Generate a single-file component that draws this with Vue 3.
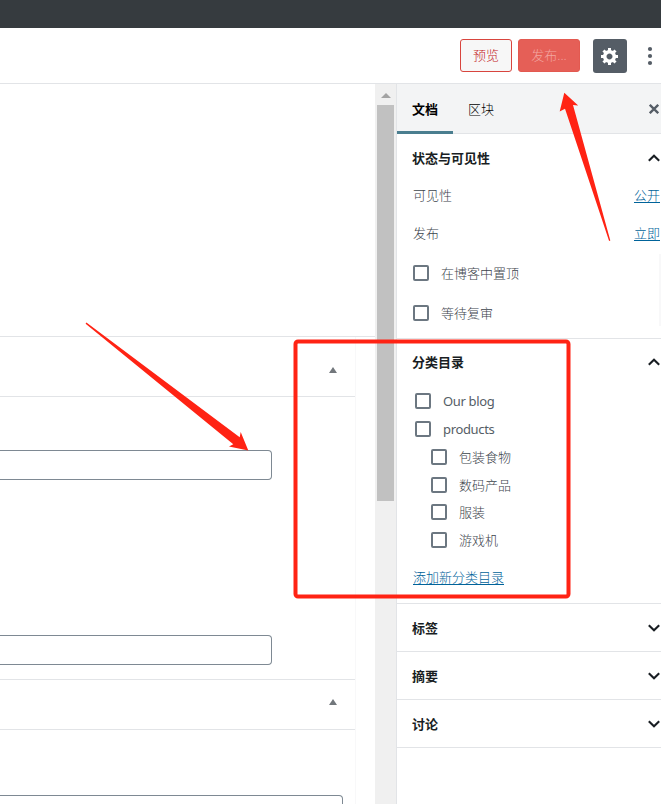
<script setup>
const categories = [
  { name: 'Our blog', latin: true },
  { name: 'products', latin: true },
  { name: '包装食物', child: true },
  { name: '数码产品', child: true },
  { name: '服装', child: true },
  { name: '游戏机', child: true },
]
const closedPanels = ['标签', '摘要', '讨论']
</script>

<template>
  <div class="editor">
    <div class="admin-bar"></div>
    <header class="toolbar">
      <button class="btn preview">预览</button>
      <button class="btn publish">发布...</button>
      <button class="gear" aria-label="设置">
        <svg width="20" height="20" viewBox="0 0 20 20"><path fill="#fff" fill-rule="evenodd" d="M18 12h-2.180c-.17.7-.44 1.350-.81 1.930l1.540 1.540-2.100 2.100-1.540-1.540c-.58.36-1.230.63-1.910.79V19H8v-2.180c-.68-.16-1.330-.43-1.910-.79l-1.540 1.540-2.120-2.120 1.540-1.540c-.36-.58-.63-1.230-.79-1.910H1V9.030h2.170c.16-.7.44-1.350.8-1.940L2.430 5.550l2.100-2.100 1.540 1.540c.58-.37 1.240-.64 1.930-.81V2h3v2.180c.68.16 1.330.43 1.910.79l1.540-1.540 2.120 2.120-1.540 1.540c.36.59.64 1.240.8 1.940H18V12zm-8.500 1.500c1.660 0 3-1.340 3-3s-1.340-3-3-3-3 1.340-3 3 1.340 3 3 3z"/></svg>
      </button>
      <svg class="more" width="6" height="20" viewBox="0 0 6 20"><g fill="#555d66"><circle cx="3" cy="3" r="2.1"/><circle cx="3" cy="10" r="2.1"/><circle cx="3" cy="17" r="2.1"/></g></svg>
    </header>

    <div class="body">
      <main class="content">
        <div class="canvas"></div>
        <div class="metaboxes">
          <div class="box-head first"><span class="up"></span></div>
          <div class="box-body">
            <div class="field"></div>
            <div class="field"></div>
          </div>
          <div class="box-head second"><span class="up"></span></div>
          <div class="box-body last"><div class="field wide"></div></div>
        </div>
      </main>

      <div class="scrollbar">
        <span class="scroll-up"></span>
        <div class="thumb"></div>
      </div>

      <aside class="sidebar">
        <nav class="tabs">
          <span class="tab active">文档</span>
          <span class="tab">区块</span>
          <svg class="close" width="10" height="10" viewBox="0 0 10 10"><path d="M.8.8l8.400 8.400M9.200.8L.8 9.200" stroke="#555d66" stroke-width="2.300"/></svg>
        </nav>

        <section class="panel status">
          <h2>状态与可见性
            <svg class="chevron" width="12" height="8" viewBox="0 0 12 8"><path d="M.8 6.700L6 1.800l5.200 4.900" fill="none" stroke="#191e23" stroke-width="2.100"/></svg>
          </h2>
          <div class="row"><span>可见性</span><a>公开</a></div>
          <div class="row"><span>发布</span><a>立即</a></div>
          <label class="check"><i></i>在博客中置顶</label>
          <label class="check"><i></i>等待复审</label>
          <div class="edge"></div>
        </section>

        <section class="panel cats">
          <h2>分类目录
            <svg class="chevron" width="12" height="8" viewBox="0 0 12 8"><path d="M.8 6.700L6 1.800l5.200 4.900" fill="none" stroke="#191e23" stroke-width="2.100"/></svg>
          </h2>
          <div class="tree">
            <label v-for="c in categories" :key="c.name" class="cat" :class="{ child: c.child, latin: c.latin }"><i></i>{{ c.name }}</label>
          </div>
          <a class="add">添加新分类目录</a>
        </section>

        <section v-for="p in closedPanels" :key="p" class="panel closed">
          <h2>{{ p }}
            <svg class="chevron" width="12" height="8" viewBox="0 0 12 8"><path d="M.8 1.300L6 6.200l5.200-4.900" fill="none" stroke="#191e23" stroke-width="2.100"/></svg>
          </h2>
        </section>
      </aside>
    </div>

    <svg class="marks" width="661" height="804" viewBox="0 0 661 804">
      <rect x="295.500" y="341.500" width="273" height="255" rx="2.500" fill="none" stroke="#ff2314" stroke-width="4"/>
      <path fill="#ff2314" d="M86.400 322.600L239.700 437.300L240.700 432L248.300 450.500L229 446.500L233.300 444.300L85.600 323.800Z"/>
      <path fill="#ff2314" d="M564.300 92.700L578.200 105.500L573 105L610.300 240.500L609.100 241.100L565 108.700L559.700 111.500Z"/>
    </svg>
  </div>
</template>

<style>
body {
  margin: 0;
  overflow: hidden;
}
</style>

<style scoped>
.editor {
  position: relative;
  display: flex;
  flex-direction: column;
  width: 661px;
  height: 804px;
  overflow: hidden;
  background: #fff;
  color: #3c444c;
  font: 300 13px/20px "Noto Sans", "Noto Sans CJK SC", sans-serif;
}
.editor * {
  box-sizing: border-box;
}
.admin-bar {
  height: 28px;
  background: #363b3f;
}
.toolbar {
  display: flex;
  align-items: center;
  height: 56px;
  padding-left: 460px;
  border-bottom: 1px solid #e2e4e7;
}
.btn {
  height: 33px;
  padding: 0 0 1px;
  border-radius: 3px;
  font: inherit;
}
.preview {
  width: 52px;
  border: 1px solid #d8453e;
  background: #f7f7f7;
  color: #c4201b;
}
.publish {
  width: 62px;
  margin-left: 6px;
  border: 1px solid #e35950;
  background: #e55f57;
  color: #f3a6a1;
}
.gear {
  display: flex;
  align-items: center;
  justify-content: center;
  width: 34px;
  height: 34px;
  margin-left: 13px;
  padding: 0;
  border: 0;
  border-radius: 3px;
  background: #555d66;
}
.more {
  margin-left: 20px;
}
.body {
  display: flex;
  height: 720px;
}
.content {
  width: 375px;
}
.canvas {
  height: 253px;
  border-bottom: 1px solid #e2e4e7;
}
.metaboxes {
  width: 356px;
  height: 467px;
  overflow: hidden;
  border-right: 1px solid #f8f8f9;
}
.box-head {
  display: flex;
  align-items: center;
  justify-content: flex-end;
  padding-right: 18px;
  border-bottom: 1px solid #e2e4e7;
}
.first {
  height: 60px;
  padding-top: 6px;
}
.second {
  height: 51px;
  border-top: 1px solid #e2e4e7;
  padding-bottom: 6px;
}
.up {
  border: 4px solid transparent;
  border-top: 0;
  border-bottom: 6px solid #72777c;
}
.box-body {
  display: flex;
  flex-direction: column;
  gap: 155px;
  height: 282px;
  padding-top: 53px;
}
.last {
  padding-top: 65px;
}
.field {
  flex: none;
  width: 272px;
  height: 30px;
  border: 1px solid #7e8993;
  border-left: 0;
  border-radius: 0 4px 4px 0;
}
.wide {
  width: 343px;
}
.scrollbar {
  width: 21px;
  padding: 9px 2px 0;
  background: #f0f0f0;
}
.scroll-up {
  display: block;
  width: 0;
  margin-left: 3.500px;
  border: 5px solid transparent;
  border-top: 0;
  border-bottom: 5px solid #a3a3a3;
}
.thumb {
  width: 17px;
  height: 396px;
  margin-top: 7px;
  background: #c1c1c1;
}
.sidebar {
  width: 265px;
  border-left: 1px solid #e2e4e7;
}
.tabs {
  display: flex;
  height: 50px;
  background: #f3f4f5;
  box-shadow: inset 0 -1px #e2e4e7;
}
.tab {
  width: 56px;
  padding: 15px 0 0 15px;
  color: #000;
}
.active {
  border-bottom: 3px solid #4a7e8f;
  font-weight: 600;
}
.close {
  margin: 20px 0 0 140px;
}
.panel {
  border-bottom: 1px solid #e2e4e7;
}
h2 {
  display: flex;
  align-items: center;
  justify-content: space-between;
  height: 47px;
  margin: 0;
  padding: 0 1px 0 15px;
  color: #191e23;
  font-size: 13px;
  font-weight: 600;
}
.status {
  height: 205px;
  position: relative;
}
.row {
  display: flex;
  justify-content: space-between;
  height: 38px;
  padding: 4px 1px 0 16px;
}
a {
  color: #00639a;
  text-decoration: underline;
  text-underline-offset: 2px;
}
.check,
.cat {
  display: flex;
  align-items: center;
  padding-left: 16px;
}
.check {
  height: 16px;
  margin: 8px 0 24px;
}
.check + .check {
  margin: 0;
}
i {
  flex: none;
  width: 16px;
  height: 16px;
  margin-right: 12px;
  border: 2px solid #6c7781;
  border-radius: 2px;
}
.edge {
  position: absolute;
  top: 120px;
  right: 0;
  width: 2px;
  height: 72px;
  background: #f8f8f9;
}
.cats {
  height: 265px;
}
.cats h2 {
  height: 46px;
}
.tree {
  padding-top: 2.400px;
}
.cat {
  height: 27.800px;
  padding-left: 18px;
}
.latin {
  color: #555d66;
  font-weight: 400;
  letter-spacing: -0.350px;
}
.child {
  padding-left: 34px;
}
.add {
  display: block;
  width: max-content;
  margin: 12.800px 0 0 16px;
}
.closed {
  height: 48px;
}
.marks {
  position: absolute;
  top: 0;
  left: 0;
  pointer-events: none;
}
</style>
